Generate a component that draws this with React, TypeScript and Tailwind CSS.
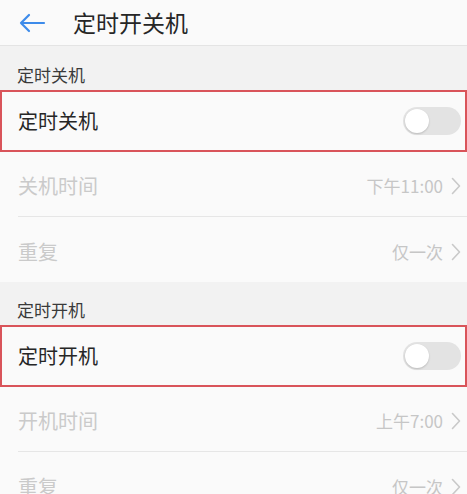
const font = { fontFamily: '"Noto Sans CJK SC", "Noto Sans", sans-serif' };

function Toggle() {
  return (
    <div className="flex h-[28px] w-[58px] items-center rounded-full bg-[#e3e3e3] px-[2px]">
      <div className="h-[24px] w-[24px] rounded-full bg-white shadow-[0_1px_2px_rgba(0,0,0,0.18)]" />
    </div>
  );
}

function Chevron() {
  return (
    <svg width="10" height="18" viewBox="0 0 10 18" fill="none" className="ml-[8px]">
      <path d="M1.5 1.5 8.5 9 1.5 16.5" stroke="#c9c9c9" strokeWidth="1.6" strokeLinecap="round" strokeLinejoin="round" />
    </svg>
  );
}

function SectionLabel({ text, h }: { text: string; h: string }) {
  return (
    <div className={`flex items-end bg-[#f2f2f2] pb-[4px] pl-[17px] text-[17px] leading-[22px] text-[#3a3a3a] ${h}`}>
      {text}
    </div>
  );
}

function SwitchRow({ text }: { text: string }) {
  return (
    <div className="flex h-[62px] items-center justify-between border-2 border-[#d9545a] bg-[#fafafa] pl-[16px] pr-[4px]">
      <span className="text-[20px] text-[#262626]">{text}</span>
      <Toggle />
    </div>
  );
}

function ValueRow({ label, value, divider }: { label: string; value: string; divider?: boolean }) {
  return (
    <div className="bg-[#fafafa] pl-[18px]">
      <div className={`flex h-[65px] items-center justify-between pr-[6px] pt-[4px] ${divider ? "border-b border-[#e6e6e6]" : ""}`}>
        <span className="text-[20px] text-[#cacaca]">{label}</span>
        <span className="flex items-center text-[17px] text-[#c6c6c6]">
          {value}
          <Chevron />
        </span>
      </div>
    </div>
  );
}

export default function App() {
  return (
    <div className="h-[494px] w-[467px] overflow-hidden bg-[#fafafa]" style={font}>
      <header className="flex h-[46px] items-center border-b border-[#e4e4e4] bg-[#fafafa]">
        <svg width="28" height="20" viewBox="0 0 28 20" fill="none" className="ml-[18px]">
          <path d="M26 10H3M11 2 3 10l8 8" stroke="#3d8bea" strokeWidth="2.2" strokeLinecap="round" strokeLinejoin="round" />
        </svg>
        <h1 className="ml-[27px] text-[23px] text-[#262626]">定时开关机</h1>
      </header>

      <SectionLabel text="定时关机" h="h-[44px]" />
      <SwitchRow text="定时关机" />
      <ValueRow label="关机时间" value="下午11:00" divider />
      <ValueRow label="重复" value="仅一次" />

      <SectionLabel text="定时开机" h="h-[43px]" />
      <SwitchRow text="定时开机" />
      <ValueRow label="开机时间" value="上午7:00" divider />
      <ValueRow label="重复" value="仅一次" />
    </div>
  );
}
